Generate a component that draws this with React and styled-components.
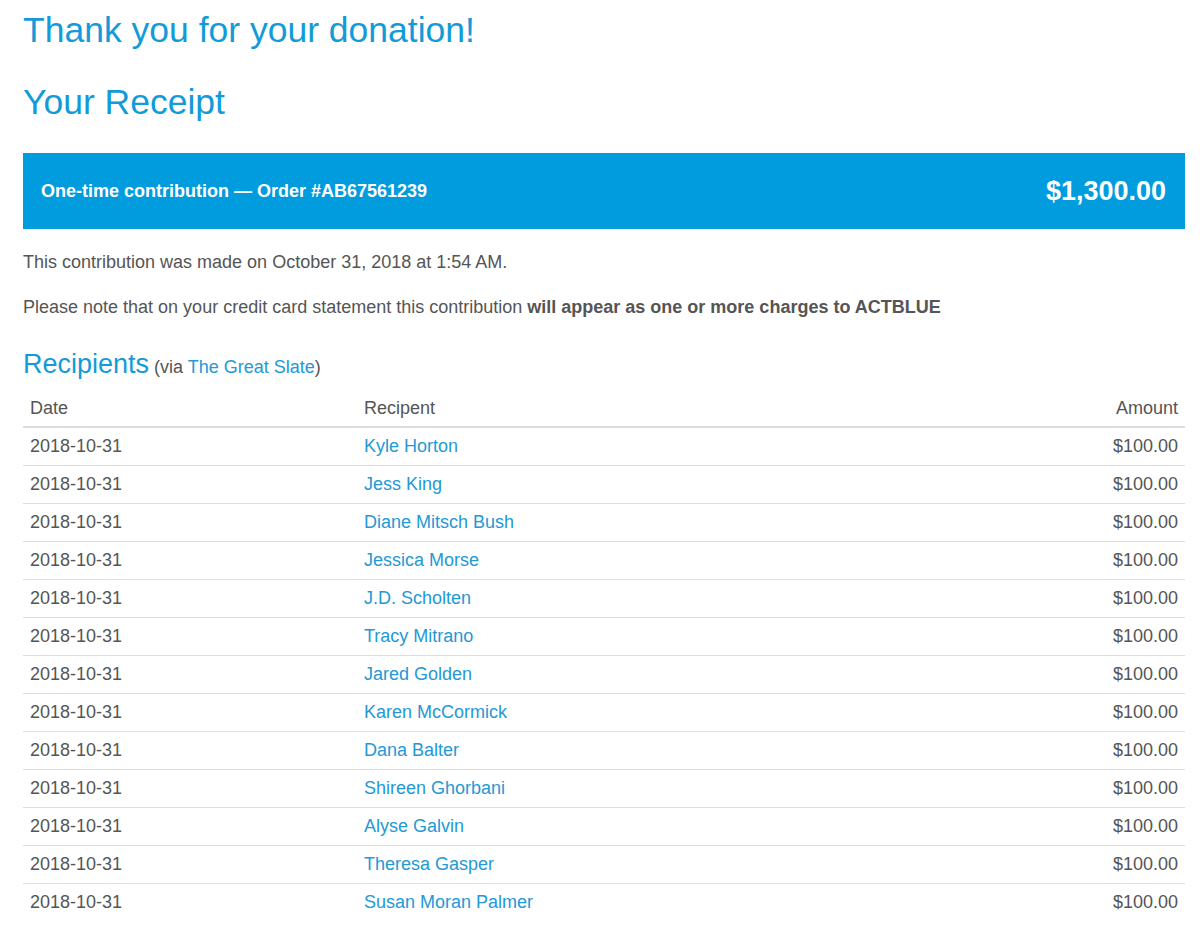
import React from 'react'
import styled, { createGlobalStyle } from 'styled-components'

const GlobalStyle = createGlobalStyle`
  body {
    margin: 0;
    background: #fff;
    font-family: "Liberation Sans", Arial, sans-serif;
    color: #555;
  }
`

const Page = styled.div`
  padding: 11px 15px 0 23px;
  width: 1162px;
`

const Title = styled.h1`
  margin: 0;
  font-size: ${p => p.$size || 35.5}px;
  font-weight: normal;
  line-height: 38px;
  color: #129bd8;
  margin-bottom: ${p => p.$gap || 0}px;
`

const Banner = styled.div`
  display: flex;
  align-items: center;
  justify-content: space-between;
  height: 76px;
  padding: 0 19px 0 18px;
  background: #009cdd;
  color: #fff;
  font-weight: bold;
`

const OrderLabel = styled.span`
  font-size: 18px;
`

const Total = styled.span`
  font-size: 27px;
`

const Note = styled.p`
  margin: 21px 0 0;
  font-size: 18px;
  line-height: 24px;
`

const SectionHead = styled.div`
  margin-top: 30px;
  line-height: 30px;
  font-size: 18px;
`

const SectionTitle = styled.span`
  font-size: 27px;
  color: #129bd8;
`

const Link = styled.a`
  color: #2399d6;
  text-decoration: none;
`

const Table = styled.table`
  width: 100%;
  margin-top: 8px;
  border-collapse: collapse;
  font-size: 18px;
  line-height: 21px;
`

const Th = styled.th`
  padding: 8px 7px 7px;
  text-align: ${p => (p.$right ? 'right' : 'left')};
  font-weight: normal;
  color: #555;
  border-bottom: 2px solid #ddd;
  width: ${p => p.$width || 'auto'};
`

const Td = styled.td`
  padding: 8px 7px;
  text-align: ${p => (p.$right ? 'right' : 'left')};
  border-top: 1px solid #ddd;
  tr:first-child > & {
    border-top: 0;
  }
`

const recipients = [
  'Kyle Horton',
  'Jess King',
  'Diane Mitsch Bush',
  'Jessica Morse',
  'J.D. Scholten',
  'Tracy Mitrano',
  'Jared Golden',
  'Karen McCormick',
  'Dana Balter',
  'Shireen Ghorbani',
  'Alyse Galvin',
  'Theresa Gasper',
  'Susan Moran Palmer',
]

export default function App() {
  return (
    <Page>
      <GlobalStyle />
      <Title $gap={34}>Thank you for your donation!</Title>
      <Title $gap={32}>Your Receipt</Title>
      <Banner>
        <OrderLabel>One-time contribution — Order #AB67561239</OrderLabel>
        <Total>$1,300.00</Total>
      </Banner>
      <Note>This contribution was made on October 31, 2018 at 1:54 AM.</Note>
      <Note>
        Please note that on your credit card statement this contribution{' '}
        <b>will appear as one or more charges to ACTBLUE</b>
      </Note>
      <SectionHead>
        <SectionTitle>Recipients</SectionTitle> (via <Link href="#">The Great Slate</Link>)
      </SectionHead>
      <Table>
        <thead>
          <tr>
            <Th $width="320px">Date</Th>
            <Th>Recipent</Th>
            <Th $right>Amount</Th>
          </tr>
        </thead>
        <tbody>
          {recipients.map(name => (
            <tr key={name}>
              <Td>2018-10-31</Td>
              <Td>
                <Link href="#">{name}</Link>
              </Td>
              <Td $right>$100.00</Td>
            </tr>
          ))}
        </tbody>
      </Table>
    </Page>
  )
}
